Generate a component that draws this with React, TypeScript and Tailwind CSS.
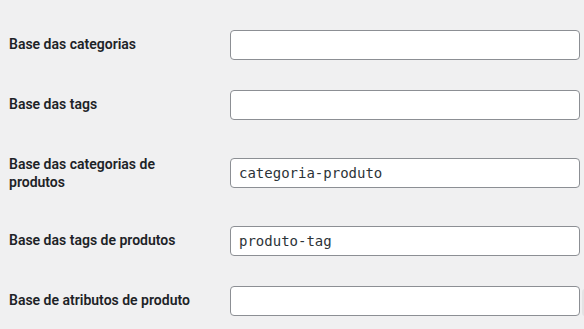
const rows = [
  { label: 'Base das categorias', value: '' },
  { label: 'Base das tags', value: '' },
  { label: 'Base das categorias de produtos', value: 'categoria-produto' },
  { label: 'Base das tags de produtos', value: 'produto-tag' },
  { label: 'Base de atributos de produto', value: '', extra: true },
];

export default function App() {
  return (
    <div className="h-[329px] w-[584px] overflow-hidden bg-[#f0f0f1] pt-[15px] pl-[8px] font-['Roboto','Liberation_Sans',sans-serif] text-[14px] text-[#1d2327]">
      {rows.map((r) => (
        <div key={r.label} className="flex">
          <div className="w-[222px] shrink-0 py-[20px] pr-[10px] pl-px font-semibold leading-[1.3]">
            <div className="w-[190px]">{r.label}</div>
          </div>
          <div className="flex flex-1 items-center py-[15px]">
            <input
              readOnly
              value={r.value}
              className="h-[30px] w-[350px] shrink-0 rounded-[4px] border border-[#8c8f94] bg-white px-[8px] font-['DejaVu_Sans_Mono',monospace] text-[14px] text-[#2c3338] outline-none"
            />
            {r.extra && <div className="ml-[2px] mt-[3px] h-[27px] w-[40px] shrink-0 rounded-[3px] bg-[#e3e3e4]" />}
          </div>
        </div>
      ))}
    </div>
  );
}
